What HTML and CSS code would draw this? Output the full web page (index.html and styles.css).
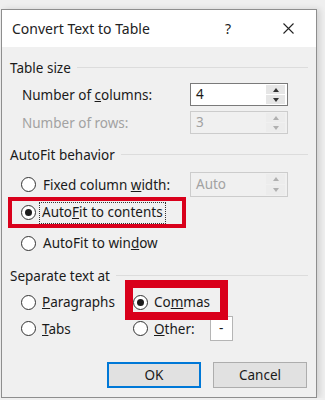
FILE: index.html
```html
<!DOCTYPE html>
<html lang="en">
<head>
    <meta charset="UTF-8">
    <meta name="viewport" content="width=device-width, initial-scale=1.0">
    <title>Convert Text to Table</title>
    <link rel="stylesheet" href="styles.css">
</head>
<body>
    <div class="dialog">
        <div class="titlebar">
            <span class="title">Convert Text to Table</span>
            <span class="help">?</span>
            <svg class="close" width="11" height="11" viewBox="0 0 11 11">
                <path d="M0.5 0.5 L10.5 10.5 M10.5 0.5 L0.5 10.5" stroke="#222" stroke-width="1.1" fill="none"/>
            </svg>
        </div>

        <div class="content">
            <div class="legend legend-first"><span>Table size</span></div>

            <div class="field-row row-cols">
                <span class="field-label">Number of <u>c</u>olumns:</span>
                <div class="spin">
                    <span class="spin-value">4</span>
                    <div class="spin-buttons">
                        <span class="arrow up"></span>
                        <span class="arrow down"></span>
                    </div>
                </div>
            </div>

            <div class="field-row row-rows disabled">
                <span class="field-label">Number of rows:</span>
                <div class="spin">
                    <span class="spin-value">3</span>
                    <div class="spin-buttons">
                        <span class="arrow up"></span>
                        <span class="arrow down"></span>
                    </div>
                </div>
            </div>

            <div class="legend legend-autofit"><span>AutoFit behavior</span></div>

            <div class="field-row row-fixed">
                <span class="radio"></span>
                <span class="radio-label fixed-label">Fixed column <u>w</u>idth:</span>
                <div class="spin disabled">
                    <span class="spin-value">Auto</span>
                    <div class="spin-buttons">
                        <span class="arrow up"></span>
                        <span class="arrow down"></span>
                    </div>
                </div>
            </div>

            <div class="mark-box">
                <span class="radio checked"></span>
                <span class="radio-label focus">Auto<u>F</u>it to contents</span>
            </div>

            <div class="option-row row-window">
                <span class="radio"></span>
                <span class="radio-label">AutoFit to win<u>d</u>ow</span>
            </div>

            <div class="legend legend-separate"><span>Separate text at</span></div>

            <div class="sep-row sep-first">
                <div class="sep-cell left">
                    <span class="radio"></span>
                    <span class="radio-label"><u>P</u>aragraphs</span>
                </div>
                <div class="sep-cell right marked">
                    <span class="radio checked"></span>
                    <span class="radio-label">Co<u>m</u>mas</span>
                </div>
            </div>

            <div class="sep-row sep-second">
                <div class="sep-cell left">
                    <span class="radio"></span>
                    <span class="radio-label"><u>T</u>abs</span>
                </div>
                <div class="sep-cell right">
                    <span class="radio"></span>
                    <span class="radio-label"><u>O</u>ther:</span>
                    <span class="other-box">-</span>
                </div>
            </div>

            <div class="buttons">
                <button class="btn default">OK</button>
                <button class="btn">Cancel</button>
            </div>
        </div>
    </div>
</body>
</html>
```

FILE: styles.css
```css
body {
    margin: 0;
    background: #efefef;
    font-family: "Segoe UI", "Noto Sans", sans-serif;
    font-size: 13.5px;
    color: #1a1a1a;
}

.dialog {
    margin: 9px 0 0 1px;
    width: 314px;
    height: 387px;
    border: 1px solid #8e8e8e;
    background: #f0f0f0;
    box-shadow: 3px 0 6px rgba(0, 0, 0, 0.12);
}

.titlebar {
    height: 37px;
    background: #fff;
    display: flex;
    align-items: center;
    padding-left: 10px;
    font-size: 14px;
}
.title {
    flex: 1;
    color: #222;
}
.help {
    width: 8px;
    margin-right: 50px;
    color: #222;
}
.close {
    margin-right: 22px;
}

.content {
    padding: 11px 0 0 0;
}

.legend {
    height: 20px;
    line-height: 20px;
    display: flex;
    align-items: center;
    padding-left: 8px;
    padding-right: 8px;
}
.legend::after {
    content: "";
    flex: 1;
    height: 1px;
    background: #dcdcdc;
    margin-left: 6px;
    margin-top: -1px;
}
.legend-autofit { margin-top: 11px; }
.legend-separate { margin-top: 13px; }

.field-row {
    display: flex;
    align-items: center;
    padding-left: 20px;
}
.row-cols { margin-top: 5px; }
.row-rows { margin-top: 5px; }
.row-fixed {
    margin-top: 7px;
    padding-left: 19px;
}
.field-label {
    width: 168px;
}
.disabled .field-label,
.disabled .spin-value {
    color: #a2a2a2;
}

.spin {
    width: 96px;
    height: 21px;
    border: 1px solid #7a7a7a;
    background: #fff;
    display: flex;
}
.row-fixed .spin {
    height: 23px;
}
.disabled .spin,
.spin.disabled {
    border-color: #cccccc;
    background: #f0f0f0;
}
.spin.disabled .spin-value {
    color: #a2a2a2;
}
.spin-value {
    flex: 1;
    padding-left: 5px;
    line-height: 21px;
}
.row-fixed .spin-value {
    line-height: 23px;
}
.spin-buttons {
    width: 19px;
    margin: 1px 2px 1px 0;
    display: flex;
    flex-direction: column;
    gap: 1px;
}
.arrow {
    flex: 1;
    background: #e6e6e6;
    display: flex;
    align-items: center;
    justify-content: center;
}
.disabled .arrow {
    background: #ececec;
}
.arrow::before {
    content: "";
    border-left: 3px solid transparent;
    border-right: 3px solid transparent;
}
.arrow.up::before { border-bottom: 4px solid #333; }
.arrow.down::before { border-top: 4px solid #333; }
.disabled .arrow.up::before { border-bottom-color: #b0b0b0; }
.disabled .arrow.down::before { border-top-color: #b0b0b0; }

.radio {
    width: 13px;
    height: 13px;
    border: 1px solid #333;
    border-radius: 50%;
    background: #fff;
    display: flex;
    align-items: center;
    justify-content: center;
    flex: none;
}
.radio.checked::before {
    content: "";
    width: 7px;
    height: 7px;
    border-radius: 50%;
    background: #1b1b1b;
}
.radio-label {
    margin-left: 7px;
}
.fixed-label {
    width: 147px;
}

.mark-box {
    box-sizing: border-box;
    margin-left: 6px;
    width: 178px;
    height: 31px;
    border: 4px solid #d9001b;
    display: flex;
    align-items: center;
    padding-left: 9px;
}
.mark-box .radio-label {
    margin-left: 3px;
}
.focus {
    border: 1px dotted #333;
    padding: 1px 2px 2px 2px;
    line-height: 17px;
}

.option-row {
    margin-top: 5px;
    height: 20px;
    display: flex;
    align-items: center;
    padding-left: 19px;
}

.sep-row {
    display: flex;
    align-items: center;
    padding-left: 19px;
}
.sep-first {
    margin-top: 6px;
    height: 20px;
}
.sep-second {
    margin-top: 4px;
    height: 25px;
}
.sep-cell {
    display: flex;
    align-items: center;
    height: 100%;
}
.sep-cell.left {
    width: 112px;
}
.sep-cell .radio-label {
    margin-left: 6px;
}
.marked {
    position: relative;
}
.marked::after {
    content: "";
    position: absolute;
    left: -8px;
    top: -12px;
    width: 87px;
    height: 24px;
    border: 8px solid #d9001b;
}
.other-box {
    width: 21px;
    height: 23px;
    margin-left: 15px;
    border: 1px solid #b5b5b5;
    background: #fff;
    line-height: 22px;
    text-align: center;
}

.buttons {
    margin-top: 21px;
    display: flex;
    justify-content: flex-end;
    gap: 12px;
    padding-right: 9px;
}
.btn {
    width: 94px;
    height: 26px;
    background: #e1e1e1;
    border: 1px solid #adadad;
    font-family: inherit;
    font-size: 13.5px;
    color: #1a1a1a;
    padding: 0;
}
.btn.default {
    border: 2px solid #0078d7;
}
```
